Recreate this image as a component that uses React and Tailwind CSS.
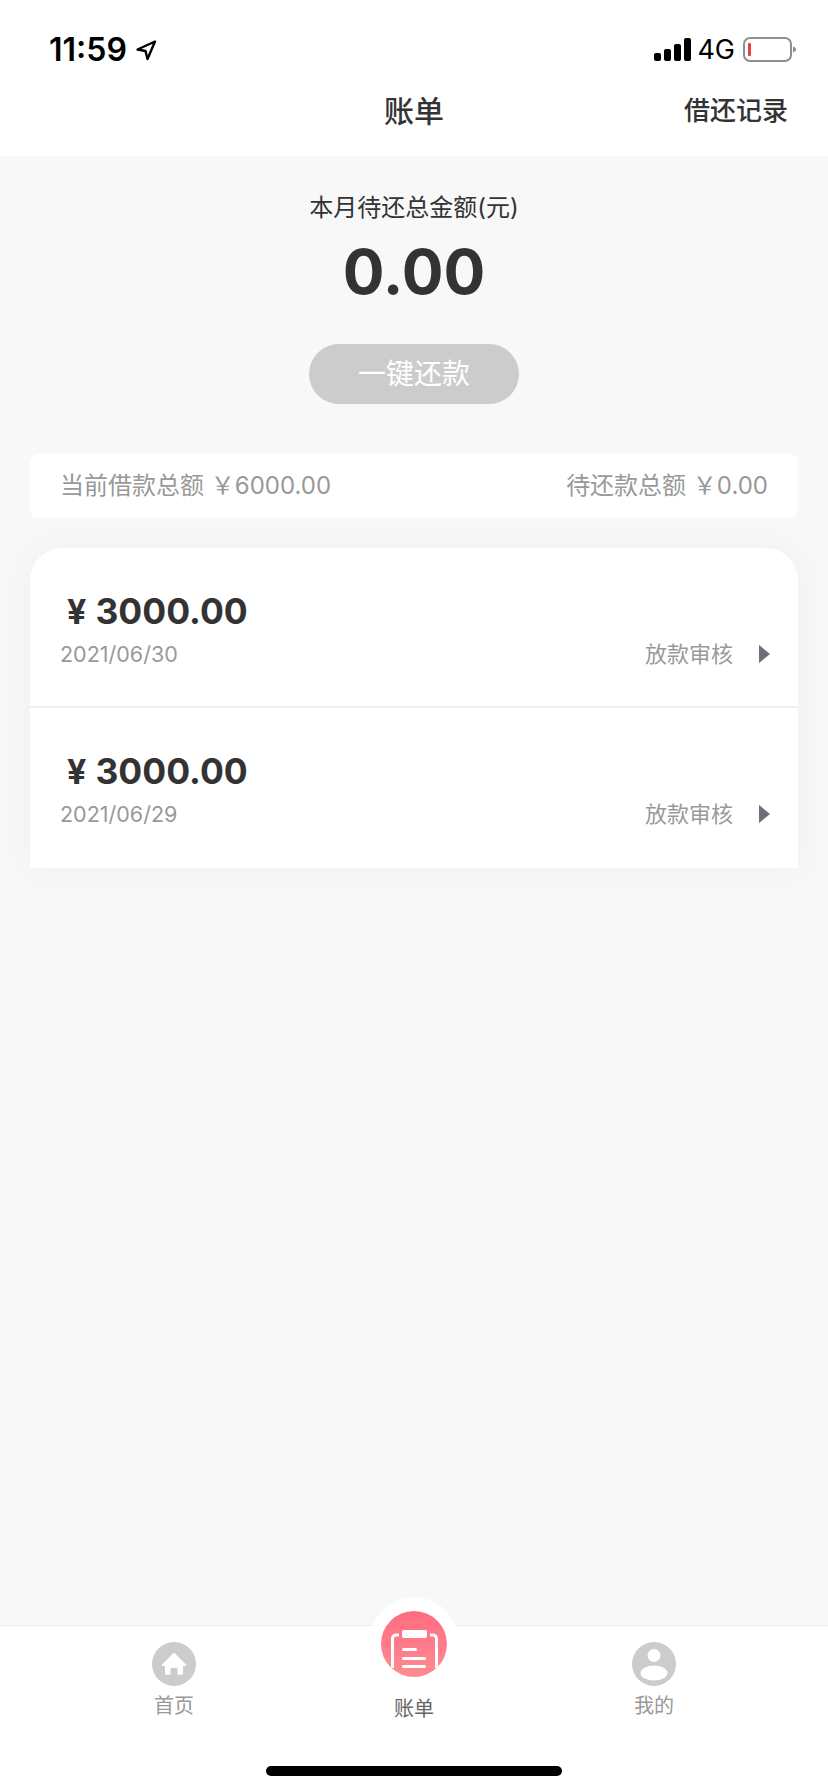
const FONT = "font-['Inter','Noto_Sans_CJK_SC',sans-serif]"

const bills = [
  { amount: '3000.00', date: '2021/06/30', status: '放款审核' },
  { amount: '3000.00', date: '2021/06/29', status: '放款审核' }
]

function StatusBar() {
  return (
    <div className="h-[70px] pt-[31px] pl-[49px] pr-[31px] flex items-start justify-between text-black">
      <div className="flex items-center gap-[8px] h-[38px]">
        <span className="text-[32px] leading-[38px] font-semibold">11:59</span>
        <svg className="w-[22px] h-[22px]" viewBox="0 0 22 22" fill="none" stroke="#000" strokeWidth="2.4" strokeLinejoin="round">
          <path d="M20 2.5 2.5 10.5l8 1.5 2 8z" />
        </svg>
      </div>
      <div className="flex items-center h-[38px]">
        <svg className="w-[37px] h-[24px]" viewBox="0 0 37 24" fill="#000">
          <rect x="0" y="15" width="7" height="8" rx="2" />
          <rect x="10" y="11" width="7" height="12" rx="2" />
          <rect x="20" y="6" width="7" height="17" rx="2" />
          <rect x="30" y="0" width="7" height="23" rx="2" />
        </svg>
        <span className="ml-[6px] text-[27px] leading-[38px] font-normal">4G</span>
        <svg className="ml-[8px] w-[54px] h-[26px]" viewBox="0 0 54 26" fill="none">
          <rect x="1" y="1" width="47" height="23" rx="6" stroke="#8e8e8e" strokeWidth="2" />
          <rect x="5" y="6" width="3" height="13" rx="1" fill="#e8413c" />
          <path d="M50 9.5c2 .5 3 1.700 3 3s-1 2.500-3 3z" fill="#8e8e8e" />
        </svg>
      </div>
    </div>
  )
}

function Header() {
  return (
    <div className="relative h-[86px] bg-white flex items-center justify-center pb-[4px]">
      <span className="text-[30px] leading-[40px] font-medium text-[#333]">账单</span>
      <span className="absolute right-[40px] top-[21px] text-[26px] leading-[40px] font-medium text-[#333]">借还记录</span>
    </div>
  )
}

function BillRow({ bill, last }) {
  return (
    <div className={`h-[160px] pl-[30px] pr-[28px] pt-[41px] ${last ? '' : 'border-b-2 border-[#eeeff1]'}`}>
      <div className="text-[35.5px] leading-[46px] font-bold text-[#333]">
        <span className="ml-[7px] mr-[9px] text-[34px]">¥</span>{bill.amount}
      </div>
      <div className="flex items-center justify-between mt-[4px] h-[30px]">
        <span className="text-[21.5px] leading-[30px] text-[#999]">{bill.date}</span>
        <div className="flex items-center">
          <span className="text-[22px] leading-[30px] text-[#999]">{bill.status}</span>
          <svg className="ml-[26px] w-[11px] h-[18px]" viewBox="0 0 11 18" fill="#6b6f7a">
            <path d="M0 0l11 9-11 9z" />
          </svg>
        </div>
      </div>
    </div>
  )
}

function HomeIcon() {
  return (
    <svg className="w-[44px] h-[44px]" viewBox="0 0 44 44">
      <circle cx="22" cy="22" r="22" fill="#ccc" />
      <path d="M22 10.500 34 22.500c.6.700.2 1.500-.6 1.500H31v7.500c0 .8-.5 1.300-1.300 1.300H25.500V26h-7v6.800h-4.200c-.8 0-1.300-.5-1.300-1.300V24h-2.400c-.8 0-1.200-.8-.6-1.500z" fill="#fff" />
    </svg>
  )
}

function MineIcon() {
  return (
    <svg className="w-[44px] h-[44px]" viewBox="0 0 44 44">
      <circle cx="22" cy="22" r="22" fill="#ccc" />
      <circle cx="22" cy="13.500" r="6.500" fill="#fff" />
      <ellipse cx="22" cy="31" rx="13.500" ry="7.500" fill="#fff" />
    </svg>
  )
}

function BillIcon() {
  return (
    <svg className="w-[66px] h-[66px]" viewBox="0 0 66 66">
      <defs>
        <linearGradient id="billGrad" x1="0" y1="0" x2="0" y2="1">
          <stop offset="0" stopColor="#ff6c81" />
          <stop offset="1" stopColor="#ff8b92" />
        </linearGradient>
      </defs>
      <circle cx="33" cy="33" r="33" fill="url(#billGrad)" />
      <rect x="21" y="19" width="25" height="8" rx="2" fill="#fff" />
      <path d="M18 24h-2.500c-2.500 0-4 1.500-4 4v29M49 24h2.500c2.500 0 4 1.500 4 4v29" fill="none" stroke="#fff" strokeWidth="3" />
      <rect x="21" y="37" width="15" height="3" rx="1.500" fill="#fff" />
      <rect x="21" y="46" width="24" height="3" rx="1.500" fill="#fff" />
      <rect x="21" y="54" width="24" height="3" rx="1.500" fill="#fff" />
    </svg>
  )
}

function TabBar() {
  return (
    <div className="relative h-[167px] bg-white border-t border-[#ececec]">
      <div className="grid grid-cols-3 px-[54px] pt-[16px]">
        <div className="flex flex-col items-center">
          <HomeIcon />
          <span className="mt-[6px] text-[20px] leading-[28px] text-[#999]">首页</span>
        </div>
        <div className="flex flex-col items-center pt-[53px]">
          <span className="text-[20px] leading-[28px] text-[#666]">账单</span>
        </div>
        <div className="flex flex-col items-center">
          <MineIcon />
          <span className="mt-[6px] text-[20px] leading-[28px] text-[#999]">我的</span>
        </div>
      </div>
      <div className="absolute left-1/2 -translate-x-1/2 top-[-29px] w-[88px] h-[88px] rounded-full bg-white flex justify-center pt-[14px]">
        <BillIcon />
      </div>
      <div className="absolute left-1/2 -translate-x-1/2 bottom-[16px] w-[296px] h-[10px] rounded-full bg-black" />
    </div>
  )
}

export default function App() {
  return (
    <div className={`${FONT} w-[828px] h-[1792px] flex flex-col bg-[#f8f8f9] overflow-hidden`}>
      <div className="bg-white">
        <StatusBar />
        <Header />
      </div>

      <div className="flex-1 px-[30px]">
        <div className="flex flex-col items-center pt-[35px]">
          <div className="text-[24px] leading-[34px] text-[#333]">本月待还总金额(元)</div>
          <div className="mt-[9px] text-[62px] leading-[76px] font-bold text-[#333]">0.00</div>
          <button className="mt-[34px] w-[210px] h-[60px] rounded-full bg-[#ccc] text-white text-[28px]">一键还款</button>
        </div>

        <div className="mt-[50px] h-[64px] px-[30px] bg-white rounded-[8px] flex items-center justify-between text-[24px] text-[#999]">
          <span>当前借款总额 ￥6000.00</span>
          <span>待还款总额 ￥0.00</span>
        </div>

        <div className="mt-[30px] bg-white rounded-t-[32px] shadow-[0_0_30px_rgba(120,130,160,0.07)]">
          {bills.map((bill, i) => (
            <BillRow key={bill.date} bill={bill} last={i === bills.length - 1} />
          ))}
        </div>
      </div>

      <TabBar />
    </div>
  )
}
